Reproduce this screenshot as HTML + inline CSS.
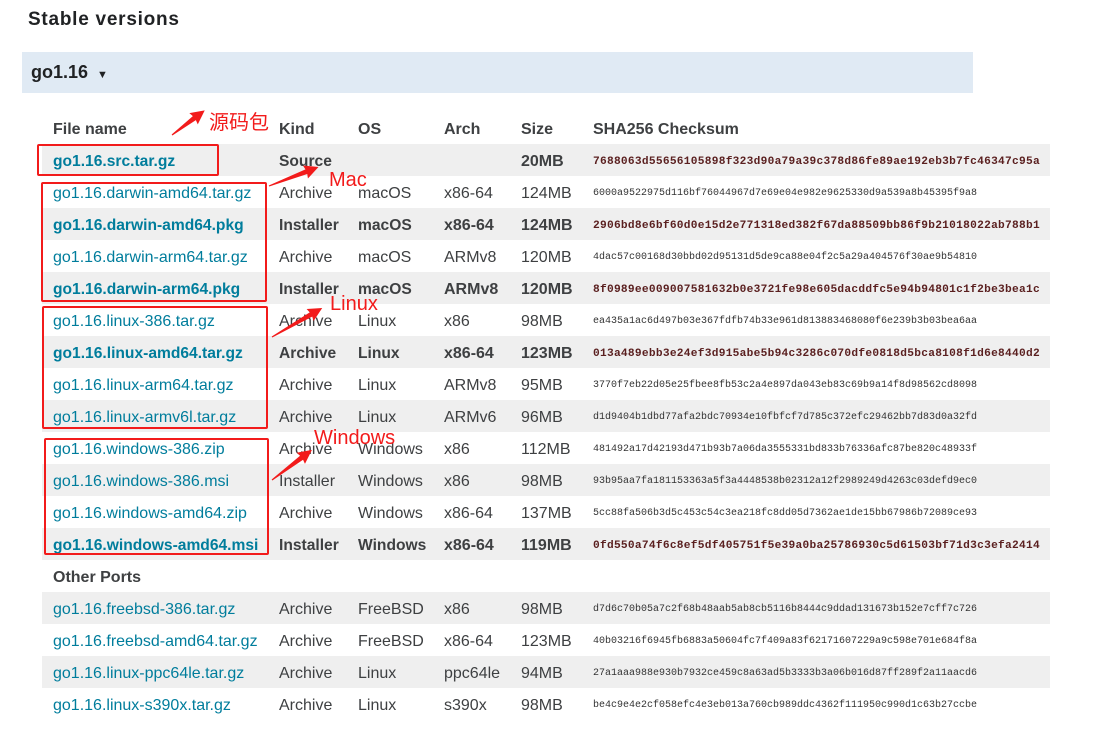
<!DOCTYPE html>
<html><head><meta charset="utf-8">
<style>
*{margin:0;padding:0;box-sizing:border-box}
body{width:1093px;height:734px;background:#fff;position:relative;overflow:hidden;font-family:"Liberation Sans","Noto Sans CJK SC",sans-serif;color:#3e4042}
.h{position:absolute;left:28px;top:9px;font-size:19px;font-weight:bold;color:#202224;letter-spacing:.75px}
.band{position:absolute;left:22px;top:52px;width:951px;height:41px;background:#e0eaf4}
.band span{position:absolute;left:9px;top:10px;font-size:18px;font-weight:bold;color:#202224}
.row{position:absolute;left:42px;width:1008px;height:32px;font-size:16px;line-height:32px}
.g{background:#efefef}
.row div{position:absolute;top:2px;white-space:nowrap}
.c1{left:11px;color:#007d9c}
.c2{left:237px}.c3{left:316px}.c4{left:402px}.c5{left:479px}
.c6{left:551px;font-family:"Liberation Mono",monospace;font-size:10px;color:#333;letter-spacing:0}
.b{font-weight:bold}
.b .c1,.b .c2,.b .c3{font-size:15.6px}
.b .c6{font-size:11.2px;color:#5a1f1f;letter-spacing:.27px}
.th{font-weight:bold;color:#3e4042}
.box{position:absolute;border:2.5px solid #f21b1b;border-radius:2px}
.lab{position:absolute;color:#f21b1b;font-size:20px;font-family:"Liberation Sans","Noto Sans CJK SC",sans-serif}
</style></head><body>
<div class="h">Stable versions</div>
<div class="band"><span>go1.16 <small style="font-size:11px;margin-left:4px">▼</small></span></div>

<div class="row th" style="top:112px"><div class="c1" style="color:#3e4042">File name</div><div class="c2">Kind</div><div class="c3">OS</div><div class="c4">Arch</div><div class="c5">Size</div><div class="c6" style="font-family:'Liberation Sans',sans-serif;font-size:16px;color:#3e4042;letter-spacing:0">SHA256 Checksum</div></div>

<div class="row g b" style="top:144px"><div class="c1">go1.16.src.tar.gz</div><div class="c2">Source</div><div class="c5">20MB</div><div class="c6">7688063d55656105898f323d90a79a39c378d86fe89ae192eb3b7fc46347c95a</div></div>
<div class="row" style="top:176px"><div class="c1">go1.16.darwin-amd64.tar.gz</div><div class="c2">Archive</div><div class="c3">macOS</div><div class="c4">x86-64</div><div class="c5">124MB</div><div class="c6">6000a9522975d116bf76044967d7e69e04e982e9625330d9a539a8b45395f9a8</div></div>
<div class="row g b" style="top:208px"><div class="c1">go1.16.darwin-amd64.pkg</div><div class="c2">Installer</div><div class="c3">macOS</div><div class="c4">x86-64</div><div class="c5">124MB</div><div class="c6">2906bd8e6bf60d0e15d2e771318ed382f67da88509bb86f9b21018022ab788b1</div></div>
<div class="row" style="top:240px"><div class="c1">go1.16.darwin-arm64.tar.gz</div><div class="c2">Archive</div><div class="c3">macOS</div><div class="c4">ARMv8</div><div class="c5">120MB</div><div class="c6">4dac57c00168d30bbd02d95131d5de9ca88e04f2c5a29a404576f30ae9b54810</div></div>
<div class="row g b" style="top:272px"><div class="c1">go1.16.darwin-arm64.pkg</div><div class="c2">Installer</div><div class="c3">macOS</div><div class="c4">ARMv8</div><div class="c5">120MB</div><div class="c6">8f0989ee009007581632b0e3721fe98e605dacddfc5e94b94801c1f2be3bea1c</div></div>
<div class="row" style="top:304px"><div class="c1">go1.16.linux-386.tar.gz</div><div class="c2">Archive</div><div class="c3">Linux</div><div class="c4">x86</div><div class="c5">98MB</div><div class="c6">ea435a1ac6d497b03e367fdfb74b33e961d813883468080f6e239b3b03bea6aa</div></div>
<div class="row g b" style="top:336px"><div class="c1">go1.16.linux-amd64.tar.gz</div><div class="c2">Archive</div><div class="c3">Linux</div><div class="c4">x86-64</div><div class="c5">123MB</div><div class="c6">013a489ebb3e24ef3d915abe5b94c3286c070dfe0818d5bca8108f1d6e8440d2</div></div>
<div class="row" style="top:368px"><div class="c1">go1.16.linux-arm64.tar.gz</div><div class="c2">Archive</div><div class="c3">Linux</div><div class="c4">ARMv8</div><div class="c5">95MB</div><div class="c6">3770f7eb22d05e25fbee8fb53c2a4e897da043eb83c69b9a14f8d98562cd8098</div></div>
<div class="row g" style="top:400px"><div class="c1">go1.16.linux-armv6l.tar.gz</div><div class="c2">Archive</div><div class="c3">Linux</div><div class="c4">ARMv6</div><div class="c5">96MB</div><div class="c6">d1d9404b1dbd77afa2bdc70934e10fbfcf7d785c372efc29462bb7d83d0a32fd</div></div>
<div class="row" style="top:432px"><div class="c1">go1.16.windows-386.zip</div><div class="c2">Archive</div><div class="c3">Windows</div><div class="c4">x86</div><div class="c5">112MB</div><div class="c6">481492a17d42193d471b93b7a06da3555331bd833b76336afc87be820c48933f</div></div>
<div class="row g" style="top:464px"><div class="c1">go1.16.windows-386.msi</div><div class="c2">Installer</div><div class="c3">Windows</div><div class="c4">x86</div><div class="c5">98MB</div><div class="c6">93b95aa7fa181153363a5f3a4448538b02312a12f2989249d4263c03defd9ec0</div></div>
<div class="row" style="top:496px"><div class="c1">go1.16.windows-amd64.zip</div><div class="c2">Archive</div><div class="c3">Windows</div><div class="c4">x86-64</div><div class="c5">137MB</div><div class="c6">5cc88fa506b3d5c453c54c3ea218fc8dd05d7362ae1de15bb67986b72089ce93</div></div>
<div class="row g b" style="top:528px"><div class="c1">go1.16.windows-amd64.msi</div><div class="c2">Installer</div><div class="c3">Windows</div><div class="c4">x86-64</div><div class="c5">119MB</div><div class="c6">0fd550a74f6c8ef5df405751f5e39a0ba25786930c5d61503bf71d3c3efa2414</div></div>
<div class="row th" style="top:560px"><div class="c1" style="color:#3e4042">Other Ports</div></div>
<div class="row g" style="top:592px"><div class="c1">go1.16.freebsd-386.tar.gz</div><div class="c2">Archive</div><div class="c3">FreeBSD</div><div class="c4">x86</div><div class="c5">98MB</div><div class="c6">d7d6c70b05a7c2f68b48aab5ab8cb5116b8444c9ddad131673b152e7cff7c726</div></div>
<div class="row" style="top:624px"><div class="c1">go1.16.freebsd-amd64.tar.gz</div><div class="c2">Archive</div><div class="c3">FreeBSD</div><div class="c4">x86-64</div><div class="c5">123MB</div><div class="c6">40b03216f6945fb6883a50604fc7f409a83f62171607229a9c598e701e684f8a</div></div>
<div class="row g" style="top:656px"><div class="c1">go1.16.linux-ppc64le.tar.gz</div><div class="c2">Archive</div><div class="c3">Linux</div><div class="c4">ppc64le</div><div class="c5">94MB</div><div class="c6">27a1aaa988e930b7932ce459c8a63ad5b3333b3a06b016d87ff289f2a11aacd6</div></div>
<div class="row" style="top:688px"><div class="c1">go1.16.linux-s390x.tar.gz</div><div class="c2">Archive</div><div class="c3">Linux</div><div class="c4">s390x</div><div class="c5">98MB</div><div class="c6">be4c9e4e2cf058efc4e3eb013a760cb989ddc4362f111950c990d1c63b27ccbe</div></div>

<div class="box" style="left:37px;top:144px;width:182px;height:32px"></div>
<div class="box" style="left:41px;top:182px;width:226px;height:120px"></div>
<div class="box" style="left:42px;top:306px;width:226px;height:123px"></div>
<div class="box" style="left:44px;top:438px;width:225px;height:117px"></div>

<div class="lab" style="left:209px;top:106px">源码包</div>
<div class="lab" style="left:329px;top:169px">Mac</div>
<div class="lab" style="left:330px;top:293px">Linux</div>
<div class="lab" style="left:314px;top:427px">Windows</div>

<svg width="1093" height="734" style="position:absolute;left:0;top:0">
<g fill="#f21b1b">
<polygon transform="translate(172,135) rotate(-37)" points="0,0.6 28,2.5 27,7 41,0 27,-7 28,-2.5 0,-0.6"/>
<polygon transform="translate(269,186) rotate(-21)" points="0,0.6 40,2.5 39,7 53,0 39,-7 40,-2.5 0,-0.6"/>
<polygon transform="translate(272,337) rotate(-30)" points="0,0.6 45,2.5 44,7 58,0 44,-7 45,-2.5 0,-0.6"/>
<polygon transform="translate(272,480) rotate(-37)" points="0,0.6 37,2.5 36,7 50,0 36,-7 37,-2.5 0,-0.6"/>
</g>
</svg>
</body></html>
